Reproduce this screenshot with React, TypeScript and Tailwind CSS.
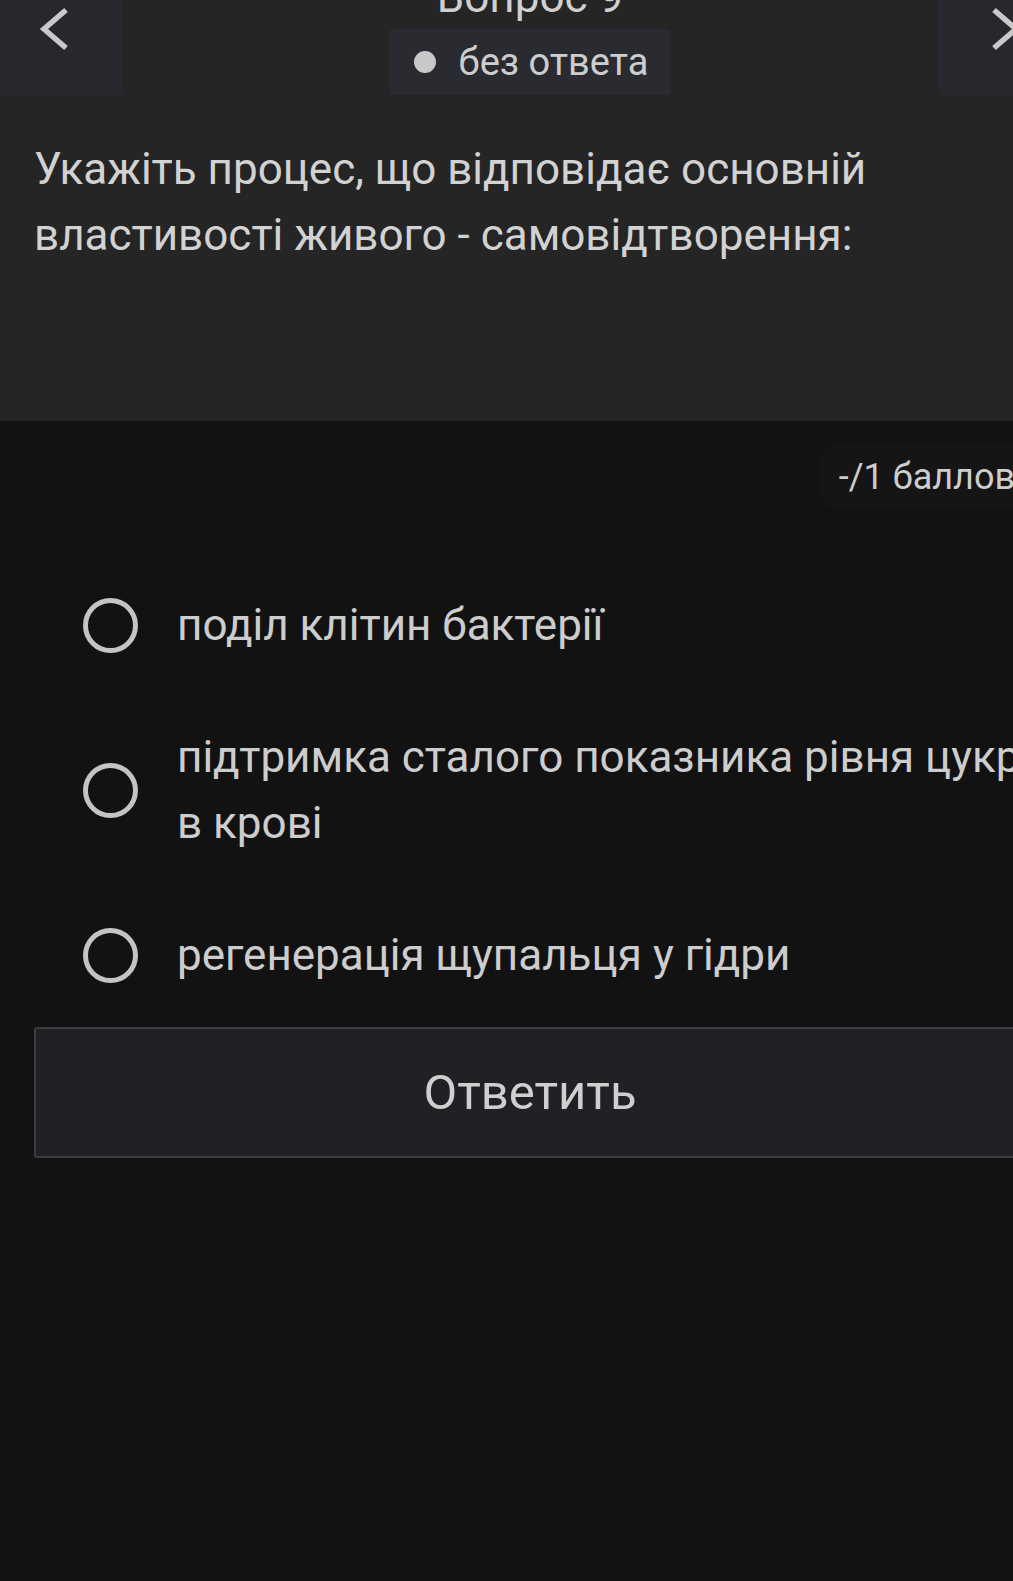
import React from "react";

const options = [
  "поділ клітин бактерії",
  "підтримка сталого показника рівня цукру в крові",
  "регенерація щупальця у гідри",
];

function Chevron({ dir }: { dir: "left" | "right" }) {
  const points = dir === "left" ? "66,10 44,29 66,48" : "56,10 78,29 56,48";
  return (
    <svg width="122" height="95" viewBox="0 0 122 95" className="block">
      <polyline
        points={points}
        fill="none"
        stroke="#c9c9c9"
        strokeWidth="5.5"
        strokeLinejoin="miter"
      />
    </svg>
  );
}

function Radio() {
  return (
    <span className="shrink-0 w-[55px] h-[55px] rounded-full border-[5px] border-[#c4c4c4]" />
  );
}

export default function App() {
  return (
    <div className="w-[1013px] h-[1581px] overflow-hidden bg-[#121212] font-['Roboto',sans-serif] text-[#cdcdcd]">
      <div className="w-[1060px]">
        {/* Question header */}
        <section className="bg-[#252525] h-[421px]">
          <div className="flex justify-between items-start">
            <button className="w-[122px] h-[95px] bg-[#27282d]">
              <Chevron dir="left" />
            </button>
            <div className="flex flex-col items-center">
              <div className="text-[44px] leading-[44px] -mt-[25px] text-[#d0d0d0]">
                Вопрос 9
              </div>
              <div className="mt-[10px] h-[66px] flex items-center pl-[25px] pr-[23px] rounded-[4px] bg-[#2a2b30]">
                <span className="w-[22px] h-[22px] rounded-full bg-[#c8c8c8]" />
                <span className="ml-[23px] text-[38px] leading-none">без ответа</span>
              </div>
            </div>
            <button className="w-[122px] h-[95px] bg-[#27282d]">
              <Chevron dir="right" />
            </button>
          </div>
          <p className="mt-[41px] px-[34px] text-[44px] leading-[66px] text-[#d2d2d2]">
            Укажіть процес, що відповідає основній властивості живого -
            самовідтворення:
          </p>
        </section>

        {/* Answers */}
        <section>
          <div className="mt-[24px] flex justify-end pr-[27px]">
            <div className="h-[64px] flex items-center px-[18px] rounded-[14px] bg-[#151515] text-[36px]">
              -/1 баллов
            </div>
          </div>

          <ul className="mt-[83px] flex flex-col gap-[66px]">
            {options.map((o) => (
              <li key={o} className="flex items-center pl-[83px]">
                <Radio />
                <span className="ml-[39px] w-[873px] text-[44px] leading-[66px]">{o}</span>
              </li>
            ))}
          </ul>

          <button className="mt-[39px] mx-[34px] w-[992px] h-[131px] rounded-[3px] border-2 border-[#3c3d40] bg-[#202125] text-[49px] text-[#cfcfcf]">
            Ответить
          </button>
        </section>
      </div>
    </div>
  );
}
